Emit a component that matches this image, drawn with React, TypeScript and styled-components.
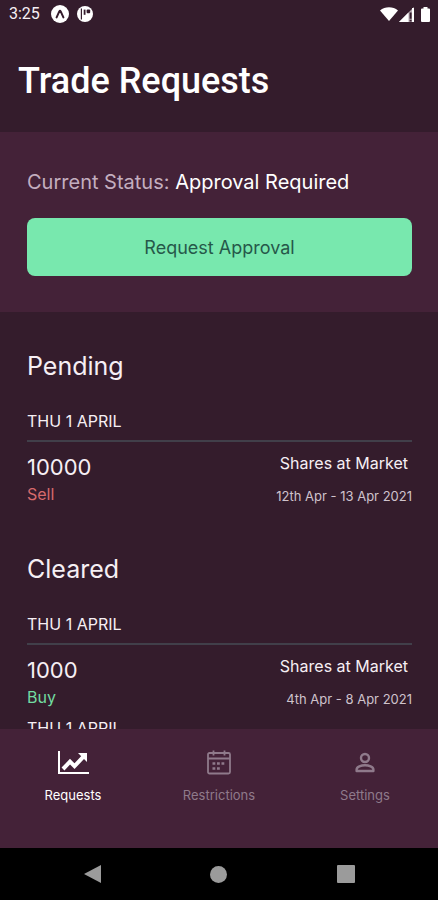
import React from 'react';
import styled, { createGlobalStyle } from 'styled-components';

const color = {
  base: '#341c2c',
  panel: '#442238',
  mint: '#78e8ae',
  mintInk: '#26584a',
  text: '#f6eff4',
  white: '#ffffff',
  soft: '#c3aebf',
  date: '#cfc3cc',
  rule: '#413f4a',
  sell: '#d76a6c',
  buy: '#72dca2',
  idle: '#8f7a8b',
  key: '#9b9b9b',
};

const GlobalStyle = createGlobalStyle`
  *, *::before, *::after { box-sizing: border-box; }
  body {
    margin: 0;
    background: ${color.base};
    color: ${color.text};
    font-family: Inter, "Liberation Sans", sans-serif;
  }
  h1, h2, h3, p { margin: 0; font-weight: 400; }
  button { font: inherit; border: 0; cursor: pointer; }
`;

const Screen = styled.div`
  display: flex;
  flex-direction: column;
  height: 100vh;
`;

const StatusBar = styled.div`
  display: flex;
  align-items: center;
  justify-content: space-between;
  height: 28px;
  padding: 0 8px 0 9px;
  flex: none;
`;

const StatusGroup = styled.div<{ $gap: number }>`
  display: flex;
  align-items: center;
  gap: ${(p) => p.$gap}px;
`;

const Clock = styled.span`
  margin-right: 3px;
  font-family: Roboto, sans-serif;
  font-size: 16px;
  line-height: 20px;
`;

const Header = styled.header`
  flex: none;
  padding: 32px 18px 30px;
`;

const Title = styled.h1`
  && { font-weight: 500; }
  color: ${color.white};
  font-family: Roboto, sans-serif;
  font-size: 36px;
  line-height: 42px;
`;

const StatusPanel = styled.section`
  flex: none;
  padding: 36px 26px 36px 27px;
  background: ${color.panel};
`;

const StatusLine = styled.p`
  margin-bottom: 22px;
  color: ${color.soft};
  font-size: 20px;
  line-height: 28px;
`;

const StatusValue = styled.span`
  color: ${color.white};
`;

const ApproveButton = styled.button`
  display: block;
  width: 100%;
  height: 58px;
  border-radius: 8px;
  background: ${color.mint};
  color: ${color.mintInk};
  && { font-size: 18px; }
`;

const TradeList = styled.main`
  flex: 1;
  min-height: 0;
  overflow: hidden;
  padding: 36px 26px 0 27px;
`;

const TradeGroup = styled.section`
  margin-bottom: 38px;
`;

const GroupTitle = styled.h2`
  margin-bottom: 25px;
  font-size: 25px;
  line-height: 36px;
`;

const DayTitle = styled.h3`
  padding-bottom: 7px;
  border-bottom: 2px solid ${color.rule};
  font-size: 16px;
  line-height: 24px;
`;

const Trade = styled.div`
  display: flex;
  justify-content: space-between;
  padding: 9px 0 7px;
`;

const TradeSide = styled.div<{ $end?: boolean }>`
  display: flex;
  flex-direction: column;
  align-items: ${(p) => (p.$end ? 'flex-end' : 'flex-start')};
`;

const Amount = styled.p`
  font-size: 22px;
  line-height: 32px;
`;

const Direction = styled.p<{ $kind: 'Sell' | 'Buy' }>`
  color: ${(p) => (p.$kind === 'Sell' ? color.sell : color.buy)};
  font-size: 16px;
  line-height: 22px;
`;

const Terms = styled.p`
  margin-bottom: 11px;
  padding-right: 4px;
  font-size: 16px;
  line-height: 24px;
`;

const Period = styled.p`
  color: ${color.date};
  font-size: 13px;
  line-height: 20px;
`;

const TabBar = styled.nav`
  display: grid;
  grid-template-columns: repeat(3, 1fr);
  flex: none;
  height: 119px;
  background: ${color.panel};
`;

const Tab = styled.button<{ $active?: boolean }>`
  display: flex;
  flex-direction: column;
  align-items: center;
  gap: 6px;
  padding: 18px 0 0;
  background: none;
  color: ${(p) => (p.$active ? color.white : color.idle)};
  && { font-size: 13px; line-height: 20px; }
`;

const SystemBar = styled.div`
  display: grid;
  grid-template-columns: repeat(3, 1fr);
  flex: none;
  height: 52px;
  padding: 0 29px;
  background: #000000;
`;

const SystemKey = styled.button`
  display: flex;
  align-items: center;
  justify-content: center;
  padding: 0;
  background: none;
  color: ${color.key};
`;

const ExpoIcon = () => (
  <svg width="18" height="18" viewBox="0 0 18 18" aria-hidden="true">
    <circle cx="9" cy="9" r="9" fill="#fff" />
    <path d="M5.6 12.4 8.3 6.4Q9 5.2 9.7 6.4l2.7 6" fill="none" stroke={color.base} strokeWidth="2" strokeLinecap="round" />
  </svg>
);

const PIcon = () => (
  <svg width="16" height="16" viewBox="0 0 16 16" aria-hidden="true">
    <circle cx="8" cy="8" r="8" fill="#fff" />
    <path d="M4.4 2.6v10.8" fill="none" stroke={color.base} strokeWidth="1.2" />
    <path d="M7.6 3.6v5.2" fill="none" stroke={color.base} strokeWidth="1.8" />
    <rect x="9.6" y="3.4" width="3.6" height="3.8" rx="1" fill={color.base} />
  </svg>
);

const WifiIcon = () => (
  <svg width="18" height="14" viewBox="0 0 18 14" aria-hidden="true">
    <path d="M9 14 0 3.4C5-.9 13-.9 18 3.4Z" fill="#fff" />
  </svg>
);

const SignalIcon = () => (
  <svg width="15" height="15" viewBox="0 0 15 15" aria-hidden="true">
    <path d="M15 0v15H0Z" fill="#b5a9b2" />
    <path d="M9.5 5.5V15H0Z" fill="#fff" />
    <path d="M11.6 5.5v6.2M11.6 12.8v1.7" stroke={color.base} strokeWidth="2" />
    <path d="M14 1v14" stroke="#fff" strokeWidth="2" />
  </svg>
);

const Battery = styled.svg`
  margin-left: 6px;
`;

const BatteryIcon = () => (
  <Battery width="9" height="15" viewBox="0 0 9 15" aria-hidden="true">
    <path d="M2.5 0h4v1.5H8a1 1 0 0 1 1 1V14a1 1 0 0 1-1 1H1a1 1 0 0 1-1-1V2.5a1 1 0 0 1 1-1h1.5Z" fill="#fff" />
  </Battery>
);

const ChartIcon = () => (
  <svg width="32" height="32" viewBox="0 0 32 32" aria-hidden="true">
    <path d="M2 4v22H32" fill="none" stroke="currentColor" strokeWidth="2" />
    <path d="m6 22 7-7.3 4.5 4.5 8.5-9" fill="none" stroke="currentColor" strokeWidth="4" />
    <path d="M21 6h9v9Z" fill="currentColor" />
  </svg>
);

const CalendarIcon = () => (
  <svg width="32" height="32" viewBox="0 0 32 32" fill="none" stroke="currentColor" aria-hidden="true">
    <rect x="5" y="6" width="22" height="20.5" rx="1.5" strokeWidth="1.8" />
    <path d="M5 11.5h22M10.5 3.5v5M21.5 3.5v5" strokeWidth="1.8" />
    <path d="M9.5 16.5h2.8m1.7 0h2.8m1.7 0h2.8M9.5 21.5h2.8m1.7 0h2.8" strokeWidth="2.4" />
  </svg>
);

const PersonIcon = () => (
  <svg width="32" height="32" viewBox="0 0 32 32" fill="none" stroke="currentColor" strokeWidth="2.4" aria-hidden="true">
    <circle cx="16" cy="11" r="4" />
    <path d="M7.6 24v-1.6c0-2.7 4.6-4.2 8.4-4.2s8.4 1.5 8.4 4.2V24Z" strokeLinejoin="round" />
  </svg>
);

type TradeData = {
  day: string;
  amount?: string;
  kind?: 'Sell' | 'Buy';
  terms?: string;
  period?: string;
};

const groups: { title: string; trades: TradeData[] }[] = [
  {
    title: 'Pending',
    trades: [
      { day: 'THU 1 APRIL', amount: '10000', kind: 'Sell', terms: 'Shares at Market', period: '12th Apr - 13 Apr 2021' },
    ],
  },
  {
    title: 'Cleared',
    trades: [
      { day: 'THU 1 APRIL', amount: '1000', kind: 'Buy', terms: 'Shares at Market', period: '4th Apr - 8 Apr 2021' },
      { day: 'THU 1 APRIL' },
    ],
  },
];

const TradeEntry = ({ day, amount, kind, terms, period }: TradeData) => (
  <article>
    <DayTitle>{day}</DayTitle>
    {kind && (
      <Trade>
        <TradeSide>
          <Amount>{amount}</Amount>
          <Direction $kind={kind}>{kind}</Direction>
        </TradeSide>
        <TradeSide $end>
          <Terms>{terms}</Terms>
          <Period>{period}</Period>
        </TradeSide>
      </Trade>
    )}
  </article>
);

export default function App() {
  return (
    <Screen>
      <GlobalStyle />
      <StatusBar>
        <StatusGroup $gap={8}>
          <Clock>3:25</Clock>
          <ExpoIcon />
          <PIcon />
        </StatusGroup>
        <StatusGroup $gap={1}>
          <WifiIcon />
          <SignalIcon />
          <BatteryIcon />
        </StatusGroup>
      </StatusBar>
      <Header>
        <Title>Trade Requests</Title>
      </Header>
      <StatusPanel>
        <StatusLine>
          Current Status: <StatusValue>Approval Required</StatusValue>
        </StatusLine>
        <ApproveButton type="button">Request Approval</ApproveButton>
      </StatusPanel>
      <TradeList>
        {groups.map((group) => (
          <TradeGroup key={group.title}>
            <GroupTitle>{group.title}</GroupTitle>
            {group.trades.map((trade, i) => (
              <TradeEntry key={i} {...trade} />
            ))}
          </TradeGroup>
        ))}
      </TradeList>
      <TabBar aria-label="Main">
        <Tab type="button" $active aria-current="page">
          <ChartIcon />
          Requests
        </Tab>
        <Tab type="button">
          <CalendarIcon />
          Restrictions
        </Tab>
        <Tab type="button">
          <PersonIcon />
          Settings
        </Tab>
      </TabBar>
      <SystemBar>
        <SystemKey type="button" aria-label="Back">
          <svg width="17" height="18" viewBox="0 0 17 18"><path d="M17 0v18L0 9Z" fill="currentColor" /></svg>
        </SystemKey>
        <SystemKey type="button" aria-label="Home">
          <svg width="17" height="17" viewBox="0 0 17 17"><circle cx="8.5" cy="8.5" r="8.5" fill="currentColor" /></svg>
        </SystemKey>
        <SystemKey type="button" aria-label="Overview">
          <svg width="18" height="18" viewBox="0 0 18 18"><rect width="18" height="18" rx="1" fill="currentColor" /></svg>
        </SystemKey>
      </SystemBar>
    </Screen>
  );
}
